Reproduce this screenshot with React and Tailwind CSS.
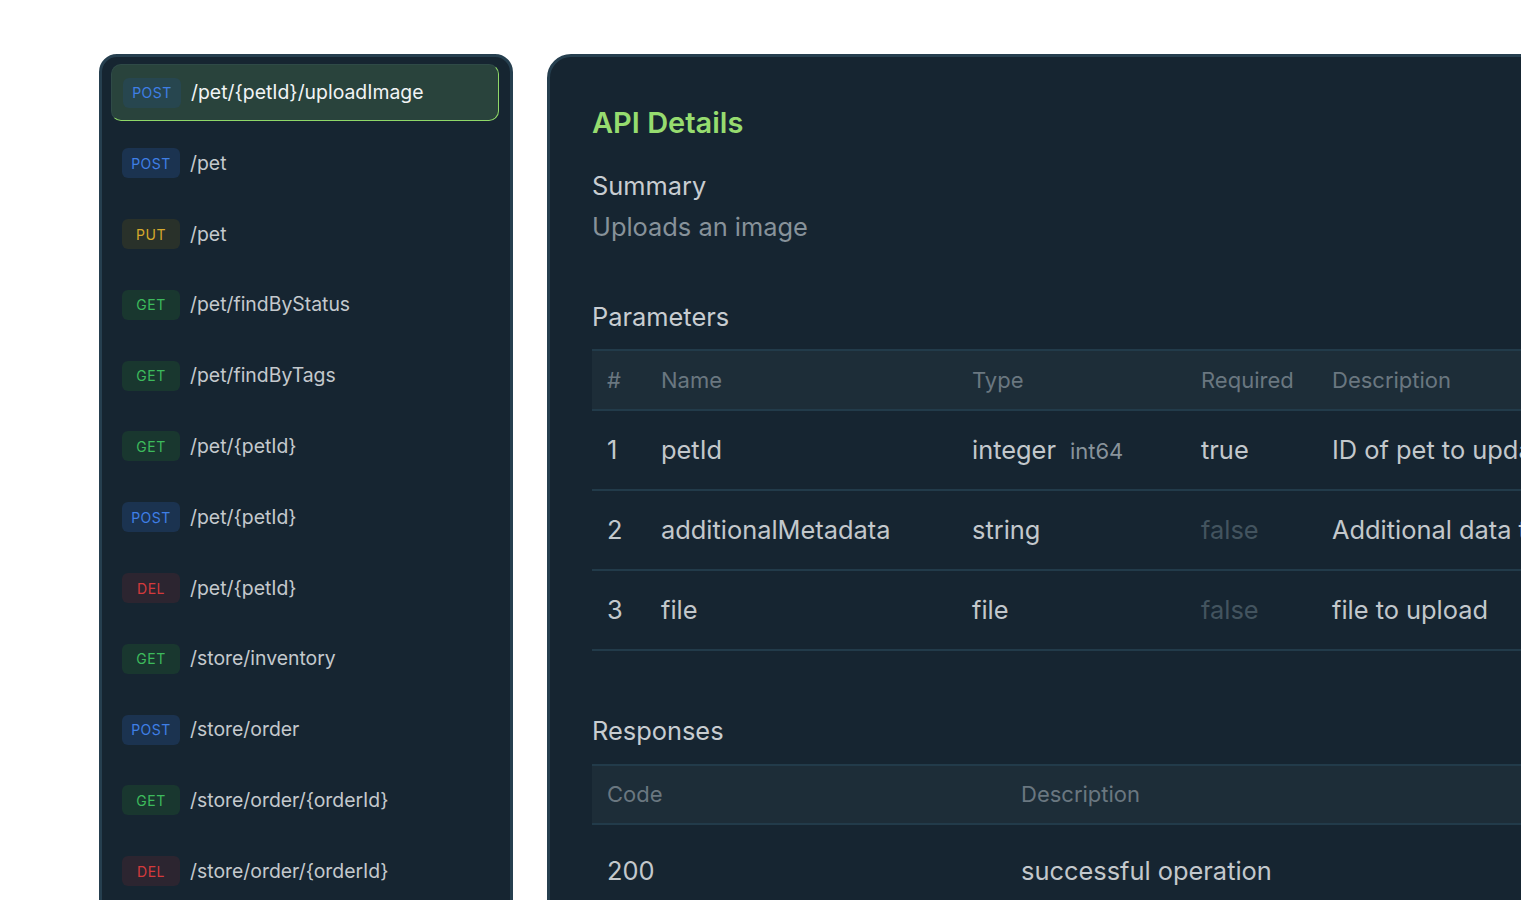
import React from 'react';

const endpoints = [
  { method: 'POST', path: '/pet/{petId}/uploadImage', active: true },
  { method: 'POST', path: '/pet' },
  { method: 'PUT', path: '/pet' },
  { method: 'GET', path: '/pet/findByStatus' },
  { method: 'GET', path: '/pet/findByTags' },
  { method: 'GET', path: '/pet/{petId}' },
  { method: 'POST', path: '/pet/{petId}' },
  { method: 'DEL', path: '/pet/{petId}' },
  { method: 'GET', path: '/store/inventory' },
  { method: 'POST', path: '/store/order' },
  { method: 'GET', path: '/store/order/{orderId}' },
  { method: 'DEL', path: '/store/order/{orderId}' },
];

const badgeStyles = {
  POST: 'bg-[#1b3350] text-[#3f7fe6]',
  PUT: 'bg-[#29312a] text-[#d6a92c]',
  GET: 'bg-[#19372f] text-[#3dba5c]',
  DEL: 'bg-[#2c2530] text-[#d43a3c]',
};

const params = [
  { n: 1, name: 'petId', type: 'integer', format: 'int64', required: true, desc: 'ID of pet to update' },
  { n: 2, name: 'additionalMetadata', type: 'string', required: false, desc: 'Additional data to pass to server' },
  { n: 3, name: 'file', type: 'file', required: false, desc: 'file to upload' },
];

function Badge({ method, active }) {
  return (
    <span
      className={`flex h-[30px] w-[58px] shrink-0 items-center justify-center rounded-md text-[14px] tracking-[0.5px] ${
        active ? 'bg-[#27464f] text-[#3f7fe6]' : badgeStyles[method]
      }`}
    >
      {method}
    </span>
  );
}

function Sidebar() {
  return (
    <aside className="h-[900px] w-[414px] shrink-0 rounded-[18px] border-[3px] border-[#263f4f] bg-[#162531] pl-[9px] pr-[11px] pt-[7px]">
      <ul className="flex flex-col gap-[13.8px]">
        {endpoints.map((ep, i) => (
          <li
            key={i}
            className={`flex h-[57px] items-center gap-[10px] rounded-[10px] px-[11px] ${
              ep.active
                ? 'border border-[#2f4a47] border-b-[#8fd868] border-r-[#8fd868] bg-[#29433c]'
                : ''
            }`}
          >
            <Badge method={ep.method} active={ep.active} />
            <span className={`text-[19.4px] ${ep.active ? 'text-[#f1f4f5]' : 'text-[#c4c9cd]'}`}>{ep.path}</span>
          </li>
        ))}
      </ul>
    </aside>
  );
}

function ParamTable() {
  const cols = 'grid grid-cols-[54px_311px_229px_131px_1fr]';
  return (
    <div className="mt-[17px]">
      <div className={`${cols} h-[62px] items-center border-y-2 border-[#223b4a] bg-[#1d2d38] text-[22px] text-[#6a7780]`}>
        <span className="pl-[15px]">#</span>
        <span className="pl-[15px]">Name</span>
        <span className="pl-[15px]">Type</span>
        <span className="pl-[15px]">Required</span>
        <span className="pl-[15px]">Description</span>
      </div>
      {params.map((p) => (
        <div key={p.n} className={`${cols} h-[80px] items-center border-b-2 border-[#223b4a] text-[25.4px] text-[#c3c8cc]`}>
          <span className="pl-[15px]">{p.n}</span>
          <span className="pl-[15px]">{p.name}</span>
          <span className="pl-[15px]">
            {p.type}
            {p.format && <span className="ml-[14px] text-[22px] text-[#88939b]">{p.format}</span>}
          </span>
          <span className={`pl-[15px] ${p.required ? '' : 'text-[#43545f]'}`}>{p.required ? 'true' : 'false'}</span>
          <span className="whitespace-nowrap pl-[15px]">{p.desc}</span>
        </div>
      ))}
    </div>
  );
}

function ResponseTable() {
  const cols = 'grid grid-cols-[414px_1fr]';
  return (
    <div className="mt-[18px]">
      <div className={`${cols} h-[61px] items-center border-y-2 border-[#223b4a] bg-[#1d2d38] text-[22px] text-[#6a7780]`}>
        <span className="pl-[15px]">Code</span>
        <span className="pl-[15px]">Description</span>
      </div>
      <div className={`${cols} h-[92px] items-center text-[25.4px] text-[#c3c8cc]`}>
        <span className="pl-[15px]">200</span>
        <span className="pl-[15px]">successful operation</span>
      </div>
    </div>
  );
}

function Details() {
  return (
    <main className="h-[900px] w-[1150px] shrink-0 rounded-[24px] border-[3px] border-[#263f4f] bg-[#162531] px-[42px] pt-[48px]">
      <h1 className="text-[29px] font-semibold leading-[36px] text-[#96dc6f]">API Details</h1>
      <h2 className="mt-[30px] text-[25.4px] leading-[30px] text-[#c8cdd1]">Summary</h2>
      <p className="mt-[11px] text-[25.4px] leading-[30px] text-[#87929a]">Uploads an image</p>
      <h2 className="mt-[60px] text-[25.4px] leading-[30px] text-[#c8cdd1]">Parameters</h2>
      <ParamTable />
      <h2 className="mt-[65px] text-[25.4px] leading-[30px] text-[#c8cdd1]">Responses</h2>
      <ResponseTable />
    </main>
  );
}

export default function App() {
  return (
    <div className="h-[900px] w-[1521px] overflow-hidden bg-white font-['Inter','Noto_Sans',sans-serif]">
      <div className="flex gap-[34px] pl-[99px] pt-[54px]">
        <Sidebar />
        <Details />
      </div>
    </div>
  );
}
